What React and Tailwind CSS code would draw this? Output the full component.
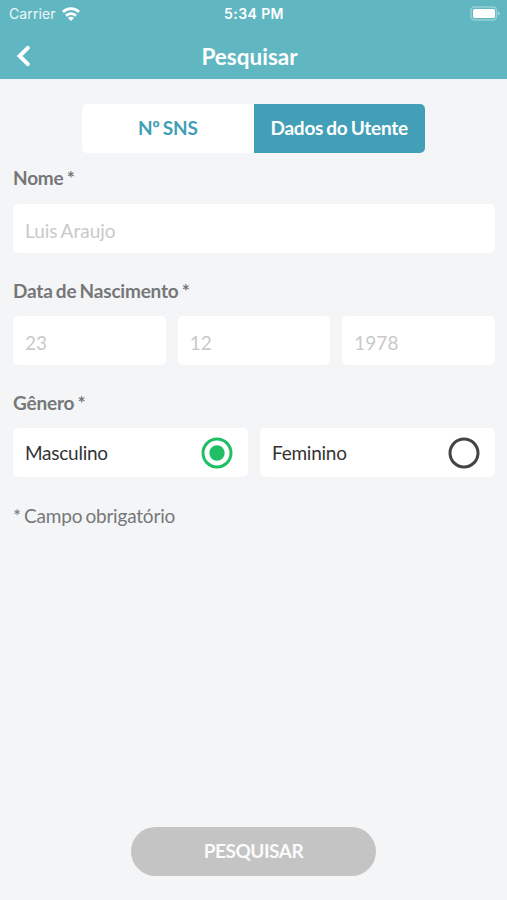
import { useState } from "react";

const tabs = ["Nº SNS", "Dados do Utente"];

function StatusBar() {
  return (
    <div className="grid h-[27px] grid-cols-3 items-center pr-[6px] pl-[9px] font-['Inter',sans-serif] text-[14px] text-white">
      <div className="flex items-center gap-[6px]">
        <span className="tracking-[0.1px] text-white/90">Carrier</span>
        <svg width="18" height="14" viewBox="0 0 18 14" fill="none" stroke="currentColor" strokeWidth="2.8">
          <path d="M1 5a11.3 11.3 0 0 1 16 0" />
          <path d="M4 8.8a7 7 0 0 1 10 0" />
          <path d="M9 14l-3-3a4.2 4.2 0 0 1 6 0z" fill="currentColor" stroke="none" />
        </svg>
      </div>
      <span className="pr-[2px] text-center font-semibold tracking-[0.4px]">5:34 PM</span>
      <svg className="justify-self-end" width="31" height="15" viewBox="0 0 31 15" fill="none">
        <rect x="1" y="1" width="25.5" height="13" rx="3.5" stroke="white" strokeOpacity="0.35" strokeWidth="1.5" />
        <rect x="3" y="3" width="22" height="9" rx="1.5" fill="white" />
        <path d="M28 5.5c2.5 1 2.5 3 0 4z" fill="white" fillOpacity="0.45" />
      </svg>
    </div>
  );
}

function Label({ children }) {
  return (
    <label className="mt-[24px] text-[19px] leading-[28px] font-bold tracking-[-0.2px] text-[#777] [word-spacing:-1.2px]">
      {children}
    </label>
  );
}

function Radio({ label, checked, onClick }) {
  return (
    <button
      type="button"
      onClick={onClick}
      className="flex h-[49px] items-center justify-between rounded-[5px] bg-white pr-[15px] pl-3 text-[19px] tracking-[-0.25px] text-[#333]"
    >
      <span className="pt-[2px]">{label}</span>
      <svg width="32" height="32" viewBox="0 0 32 32" fill="none">
        <circle cx="16" cy="16" r="14" stroke={checked ? "#20bf65" : "#444"} strokeWidth="3" />
        {checked && <circle cx="16" cy="16" r="7.7" fill="#20bf65" />}
      </svg>
    </button>
  );
}

function Field({ placeholder }) {
  return (
    <input
      className="h-[49px] w-full min-w-0 rounded-[5px] bg-white px-3 pt-[4px] text-[19px] [word-spacing:-1.2px] placeholder:text-[#c9c9c9] focus:outline-none"
      placeholder={placeholder}
    />
  );
}

export default function App() {
  const [tab, setTab] = useState(1);
  const [gender, setGender] = useState("Masculino");

  return (
    <div className="flex h-[900px] w-[507px] flex-col bg-[#f3f5f7] font-['Lato',sans-serif]">
      <header className="h-[79px] bg-[#60b7c1]">
        <StatusBar />
        <div className="grid h-[52px] grid-cols-[40px_1fr_48px] items-center pt-[6px] text-white">
          <svg
            className="ml-4"
            width="15"
            height="22"
            viewBox="0 0 15 22"
            fill="none"
            stroke="currentColor"
            strokeWidth="4"
            strokeLinecap="round"
          >
            <path d="M11.8 2.8L3.6 11l8.2 8.2" />
          </svg>
          <h1 className="pt-[2px] text-center text-[22.5px] leading-7 font-bold">Pesquisar</h1>
        </div>
      </header>

      <main className="flex flex-1 flex-col pt-[25px] pr-3 pb-6 pl-[13px]">
        <div className="ml-[69px] grid h-[49px] w-[343px] grid-cols-2 overflow-hidden rounded-[5px] bg-white">
          {tabs.map((name, i) => (
            <button
              key={name}
              type="button"
              onClick={() => setTab(i)}
              className={`text-[19px] font-bold tracking-[-0.25px] [word-spacing:-1.2px] ${
                tab === i ? "bg-[#429fb7] text-white" : "text-[#429fb7]"
              }`}
            >
              {name}
            </button>
          ))}
        </div>

        <div className="-mt-[13px] flex flex-col">
          <Label>Nome *</Label>
        </div>
        <div className="mt-[12px]">
          <Field placeholder="Luis Araujo" />
        </div>

        <Label>Data de Nascimento *</Label>
        <div className="mt-[11px] grid grid-cols-3 gap-3">
          <Field placeholder="23" />
          <Field placeholder="12" />
          <Field placeholder="1978" />
        </div>

        <Label>Gênero *</Label>
        <div className="mt-[11px] grid grid-cols-2 gap-3">
          {["Masculino", "Feminino"].map((g) => (
            <Radio key={g} label={g} checked={gender === g} onClick={() => setGender(g)} />
          ))}
        </div>

        <p className="mt-[25px] text-[19px] leading-[28px] tracking-[-0.2px] text-[#777] [word-spacing:-1.5px]">
          * Campo obrigatório
        </p>

        <button
          type="button"
          className="mt-auto ml-[118px] h-[49px] w-[245px] rounded-full bg-[#c4c4c4] text-[19px] font-bold tracking-[-0.5px] text-white/95"
        >
          PESQUISAR
        </button>
      </main>
    </div>
  );
}
